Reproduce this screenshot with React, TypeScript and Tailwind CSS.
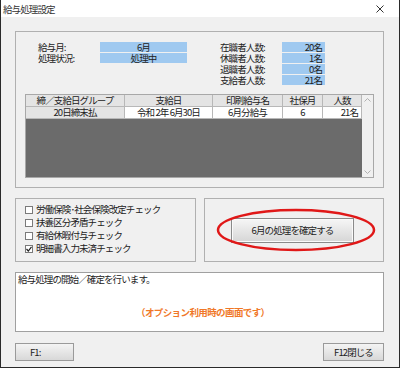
const font = "font-['Noto_Sans_CJK_JP','Noto_Sans',sans-serif]";
const txt = "text-[9.5px] tracking-[-0.9px] text-[#222]";

function Field({ value, align }: { value: string; align: "center" | "right" }) {
  return (
    <div
      className={`h-[10px] bg-[#9fc9f0] leading-[10px] ${txt} ${
        align === "center" ? "text-center" : "text-right pr-[3px]"
      }`}
    >
      {value}
    </div>
  );
}

function Check({ label, checked }: { label: string; checked?: boolean }) {
  return (
    <div className="flex items-center h-[13px]">
      <div className="w-[8px] h-[8px] border border-[#7a7a7a] bg-white ml-[9px] mr-[3px] flex items-center justify-center">
        {checked && (
          <svg width="6" height="6" viewBox="0 0 6 6">
            <path d="M0.5 3 L2.3 5 L5.5 0.8" stroke="#222" strokeWidth="1.2" fill="none" />
          </svg>
        )}
      </div>
      <span className={`${txt} leading-[13px]`}>{label}</span>
    </div>
  );
}

export default function App() {
  const cell = `border-r border-[#b8b8b8] ${txt} leading-[11px] flex items-center`;
  return (
    <div className={`w-[400px] h-[368px] bg-[#f0f0f0] border-x border-b border-[#2a2a2a] flex flex-col ${font}`}>
      {/* title bar */}
      <div className="h-[17px] bg-white flex items-center justify-between pl-[2px] pr-[15px]">
        <span className={`${txt} leading-[10px] text-[#333]`}>給与処理設定</span>
        <svg width="8" height="8" viewBox="0 0 8 8">
          <path d="M0.5 0.5 L7.5 7.5 M7.5 0.5 L0.5 7.5" stroke="#333" strokeWidth="1" />
        </svg>
      </div>

      <div className="flex flex-col pl-[14px] pr-[15px]">
        {/* group 1 */}
        <div className="mt-[14px] h-[157px] border border-[#b0b0b0] flex flex-col pl-[9px] pr-[9px]">
          <div className="flex mt-[10px] h-[45px]">
            <div className="flex flex-col pl-[13px] w-[171px] gap-[1px]">
              <div className="flex items-center">
                <span className={`w-[62px] leading-[10px] ${txt}`}>給与月:</span>
                <div className="w-[87px]"><Field value="6月" align="center" /></div>
              </div>
              <div className="flex items-center">
                <span className={`w-[62px] leading-[10px] ${txt}`}>処理状況:</span>
                <div className="w-[87px]"><Field value="処理中" align="center" /></div>
              </div>
            </div>
            <div className="flex flex-col pl-[24px] gap-[1px]">
              {[
                ["在職者人数:", "20名"],
                ["休職者人数:", "1名"],
                ["退職者人数:", "0名"],
                ["支給者人数:", "21名"],
              ].map(([l, v]) => (
                <div key={l} className="flex items-center">
                  <span className={`w-[62px] leading-[10px] ${txt}`}>{l}</span>
                  <div className="w-[43px]"><Field value={v} align="right" /></div>
                </div>
              ))}
            </div>
          </div>

          {/* table */}
          <div className="mt-[7px] h-[84px] w-[349px] flex border border-[#a8a8a8]">
            <div className="flex-1 flex flex-col bg-[#6b6b6b]">
              <div className="flex h-[12px] bg-[#e4e4e4] border-b border-[#b8b8b8]">
                <div className={`${cell} w-[99px] justify-center`}>締／支給日グループ</div>
                <div className={`${cell} w-[88px] justify-center`}>支給日</div>
                <div className={`${cell} w-[70px] justify-center`}>印刷給与名</div>
                <div className={`${cell} w-[40px] justify-center`}>社保月</div>
                <div className={`${cell} w-[39px] justify-center`}>人数</div>
              </div>
              <div className="flex h-[12px] bg-white border-b border-[#b8b8b8]">
                <div className={`${cell} w-[99px] justify-center bg-[#e4e4e4]`}>20日締末払</div>
                <div className={`${cell} w-[88px] justify-center`}>令和 2年 6月30日</div>
                <div className={`${cell} w-[70px] justify-center`}>6月分給与</div>
                <div className={`${cell} w-[40px] justify-center`}>6</div>
                <div className={`${cell} w-[39px] justify-end pr-[3px]`}>21名</div>
              </div>
            </div>
            <div className="w-[12px] bg-[#f0f0f0] flex flex-col justify-between items-center py-[3px]">
              <svg width="7" height="4" viewBox="0 0 7 4">
                <path d="M0.5 3.5 L3.5 0.5 L6.5 3.5" stroke="#b0b0b0" fill="none" />
              </svg>
              <svg width="7" height="4" viewBox="0 0 7 4">
                <path d="M0.5 0.5 L3.5 3.5 L6.5 0.5" stroke="#b0b0b0" fill="none" />
              </svg>
            </div>
          </div>
        </div>

        {/* middle row */}
        <div className="flex mt-[10px] h-[64px] gap-[8px]">
          <div className="w-[181px] border border-[#b0b0b0] flex flex-col pt-[4px]">
            <Check label="労働保険･社会保険改定チェック" />
            <Check label="扶養区分矛盾チェック" />
            <Check label="有給休暇付与チェック" />
            <Check label="明細書入力未済チェック" checked />
          </div>
          <div className="flex-1 border border-[#b0b0b0] relative flex items-center justify-center">
            <button className={`w-[123px] h-[25px] mr-[3px] border border-[#8a8a8a] bg-gradient-to-b from-[#f6f6f6] to-[#d6d6d6] ${txt} leading-[11px] shadow-[inset_0_0_0_1px_#fafafa]`}>
              6月の処理を確定する
            </button>
            <svg className="absolute left-[11px] top-[9px]" width="160" height="44" viewBox="0 0 160 44">
              <ellipse cx="80" cy="22" rx="78" ry="20" stroke="#e01818" strokeWidth="2.5" fill="none" />
            </svg>
          </div>
        </div>

        {/* message box */}
        <div className="mt-[10px] h-[60px] bg-white border border-[#a0a0a0] flex flex-col px-[2px]">
          <span className={`${txt} leading-[11px] mt-[1px]`}>給与処理の開始／確定を行います。</span>
          <span className="mt-[22px] ml-[118px] text-[9.5px] tracking-[-0.6px] leading-[11px] font-bold text-[#f07828]">
            （オプション利用時の画面です）
          </span>
        </div>

        {/* buttons */}
        <div className="flex justify-between mt-[11px]">
          <button className={`w-[59px] h-[18px] border border-[#9a9a9a] bg-gradient-to-b from-[#f4f4f4] to-[#d8d8d8] ${txt} leading-[11px] text-left pl-[14px]`}>
            F1:
          </button>
          <button className={`w-[61px] h-[18px] border border-[#9a9a9a] bg-gradient-to-b from-[#f4f4f4] to-[#d8d8d8] ${txt} leading-[11px]`}>
            F12閉じる
          </button>
        </div>
      </div>
    </div>
  );
}
